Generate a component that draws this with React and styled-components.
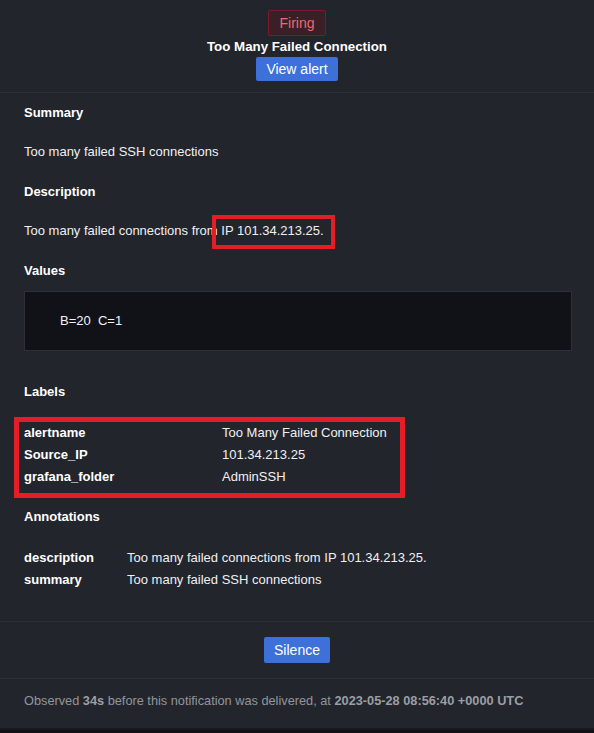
import React from "react";
import styled, { createGlobalStyle } from "styled-components";

const Global = createGlobalStyle`
  html, body { margin: 0; padding: 0; }
  body {
    background: #111217;
    font-family: "Liberation Sans", Arial, sans-serif;
    font-size: 13px;
    line-height: 16px;
    color: #ececf0;
  }
`;

const Card = styled.div`
  background: #22252b;
  border-bottom: 2px solid #181a1f;
`;

const Header = styled.header`
  display: flex;
  flex-direction: column;
  align-items: center;
  gap: 2px;
  padding: 10px 0 11px;
  border-bottom: 1px solid #2c3037;
`;

const Badge = styled.span`
  display: inline-block;
  height: 26px;
  box-sizing: border-box;
  padding: 0 10px;
  line-height: 24px;
  font-size: 14px;
  color: #ea6a73;
  background: #3b1f26;
  border: 1px solid #7e1a27;
  border-radius: 2px;
`;

const Title = styled.div`
  font-weight: bold;
  font-size: 13.3px;
  line-height: 17px;
  color: #ffffff;
`;

const Button = styled.button`
  height: ${(p) => p.$h}px;
  padding: 0 10px;
  border: none;
  border-radius: 2px;
  background: #3d71d9;
  color: #ffffff;
  font-family: "Liberation Sans", Arial, sans-serif;
  font-size: 14px;
  line-height: ${(p) => p.$h}px;
  cursor: pointer;
`;

const Main = styled.main`
  padding: 11.5px 22px 29.5px 24px;
`;

const Section = styled.section`
  margin-top: ${(p) => p.$top || 0}px;
`;

const Heading = styled.h3`
  margin: 0 0 ${(p) => p.$gap}px;
  font-size: 13px;
  line-height: 16px;
  font-weight: bold;
  color: #ffffff;
`;

const Text = styled.p`
  margin: 0;
  color: #f0f0f3;
`;

const Highlight = styled.span`
  position: relative;
  &::after {
    content: "";
    position: absolute;
    top: -8px;
    bottom: -11px;
    left: -9px;
    right: -11px;
    border: 4px solid #e41e26;
    pointer-events: none;
  }
`;

const CodeBox = styled.div`
  height: 60px;
  box-sizing: border-box;
  padding: 21px 35px;
  background: #111217;
  border: 1px solid #2c3037;
  white-space: pre;
  color: #f2f2f4;
`;

const KVGrid = styled.div`
  position: relative;
  display: grid;
  grid-template-columns: ${(p) => p.$key}px 1fr;
  grid-auto-rows: 22px;
  align-items: center;
  ${(p) =>
    p.$boxed &&
    `
    &::after {
      content: "";
      position: absolute;
      top: -5px;
      bottom: -10px;
      left: -10px;
      width: 391px;
      box-sizing: border-box;
      border: 5px solid #e41e26;
      pointer-events: none;
    }
  `}
`;

const Key = styled.div`
  font-weight: bold;
  color: #ffffff;
`;

const Val = styled.div`
  color: #f0f0f3;
`;

const ActionBar = styled.div`
  display: flex;
  justify-content: center;
  padding: 15px 0;
  border-top: 1px solid #2c3037;
  border-bottom: 1px solid #2c3037;
`;

const Footer = styled.footer`
  padding: 14.5px 24px 18.5px;
  font-size: 12.75px;
  color: #93959c;
  b { font-weight: bold; color: #9c9ea5; }
`;

const labels = [
  ["alertname", "Too Many Failed Connection"],
  ["Source_IP", "101.34.213.25"],
  ["grafana_folder", "AdminSSH"],
];

const annotations = [
  ["description", "Too many failed connections from IP 101.34.213.25."],
  ["summary", "Too many failed SSH connections"],
];

export default function App() {
  return (
    <>
      <Global />
      <Card>
        <Header>
          <Badge>Firing</Badge>
          <Title>Too Many Failed Connection</Title>
          <Button $h={24}>View alert</Button>
        </Header>
        <Main>
          <Section>
            <Heading $gap={23.5}>Summary</Heading>
            <Text>Too many failed SSH connections</Text>
          </Section>
          <Section $top={23.5}>
            <Heading $gap={23.5}>Description</Heading>
            <Text>
              Too many failed connections from <Highlight>IP 101.34.213.25.</Highlight>
            </Text>
          </Section>
          <Section $top={23.5}>
            <Heading $gap={12.5}>Values</Heading>
            <CodeBox>{"B=20  C=1"}</CodeBox>
          </Section>
          <Section $top={32.5}>
            <Heading $gap={22.3}>Labels</Heading>
            <KVGrid $key={198} $boxed>
              {labels.map(([k, v]) => (
                <React.Fragment key={k}>
                  <Key>{k}</Key>
                  <Val>{v}</Val>
                </React.Fragment>
              ))}
            </KVGrid>
          </Section>
          <Section $top={21.7}>
            <Heading $gap={22}>Annotations</Heading>
            <KVGrid $key={103}>
              {annotations.map(([k, v]) => (
                <React.Fragment key={k}>
                  <Key>{k}</Key>
                  <Val>{v}</Val>
                </React.Fragment>
              ))}
            </KVGrid>
          </Section>
        </Main>
        <ActionBar>
          <Button $h={26}>Silence</Button>
        </ActionBar>
        <Footer>
          Observed <b>34s</b> before this notification was delivered, at{" "}
          <b>2023-05-28 08:56:40 +0000 UTC</b>
        </Footer>
      </Card>
    </>
  );
}
